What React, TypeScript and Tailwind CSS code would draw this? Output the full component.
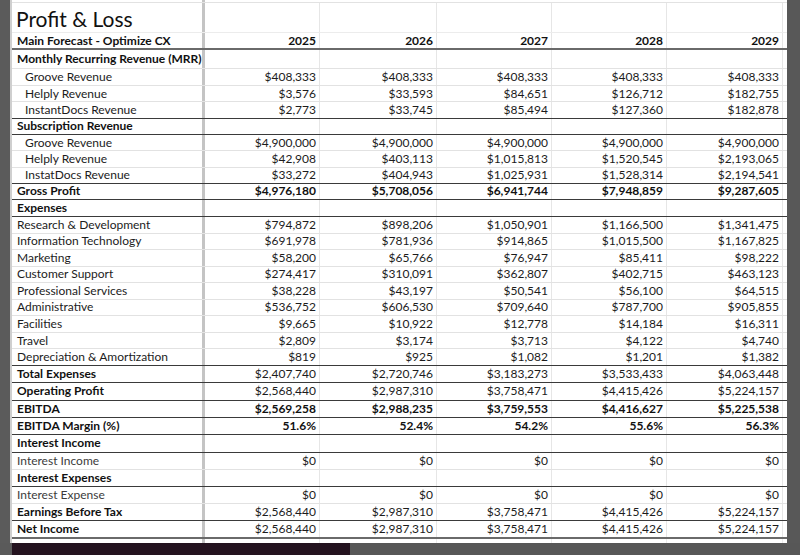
import React from 'react'

type Line = 'none' | 'light' | 'dark' | 'thick'

type Row = {
  label: string
  values?: string[]
  bold?: boolean
  boldValues?: boolean
  indent?: boolean
  h: string
  line: Line
  muted?: boolean
}

const rows: Row[] = [
  { label: 'Monthly Recurring Revenue (MRR)', bold: true, h: 'h-[19px]', line: 'light' },
  { label: 'Groove Revenue', indent: true, h: 'h-[16.7px]', line: 'light', values: ['$408,333', '$408,333', '$408,333', '$408,333', '$408,333'] },
  { label: 'Helply Revenue', indent: true, h: 'h-[16.7px]', line: 'light', values: ['$3,576', '$33,593', '$84,651', '$126,712', '$182,755'] },
  { label: 'InstantDocs Revenue', indent: true, h: 'h-[16.6px]', line: 'dark', values: ['$2,773', '$33,745', '$85,494', '$127,360', '$182,878'] },
  { label: 'Subscription Revenue', bold: true, h: 'h-[16px]', line: 'dark' },
  { label: 'Groove Revenue', indent: true, h: 'h-[16.4px]', line: 'light', values: ['$4,900,000', '$4,900,000', '$4,900,000', '$4,900,000', '$4,900,000'] },
  { label: 'Helply Revenue', indent: true, h: 'h-[16.3px]', line: 'light', values: ['$42,908', '$403,113', '$1,015,813', '$1,520,545', '$2,193,065'] },
  { label: 'InstatDocs Revenue', indent: true, h: 'h-[16.3px]', line: 'dark', values: ['$33,272', '$404,943', '$1,025,931', '$1,528,314', '$2,194,541'] },
  { label: 'Gross Profit', bold: true, boldValues: true, h: 'h-[16px]', line: 'dark', values: ['$4,976,180', '$5,708,056', '$6,941,744', '$7,948,859', '$9,287,605'] },
  { label: 'Expenses', bold: true, h: 'h-[17px]', line: 'dark' },
  { label: 'Research & Development', h: 'h-[16.55px]', line: 'light', values: ['$794,872', '$898,206', '$1,050,901', '$1,166,500', '$1,341,475'] },
  { label: 'Information Technology', h: 'h-[16.55px]', line: 'light', values: ['$691,978', '$781,936', '$914,865', '$1,015,500', '$1,167,825'] },
  { label: 'Marketing', h: 'h-[16.55px]', line: 'light', values: ['$58,200', '$65,766', '$76,947', '$85,411', '$98,222'] },
  { label: 'Customer Support', h: 'h-[16.55px]', line: 'light', values: ['$274,417', '$310,091', '$362,807', '$402,715', '$463,123'] },
  { label: 'Professional Services', h: 'h-[16.55px]', line: 'light', values: ['$38,228', '$43,197', '$50,541', '$56,100', '$64,515'] },
  { label: 'Administrative', h: 'h-[16.55px]', line: 'light', values: ['$536,752', '$606,530', '$709,640', '$787,700', '$905,855'] },
  { label: 'Facilities', h: 'h-[16.55px]', line: 'light', values: ['$9,665', '$10,922', '$12,778', '$14,184', '$16,311'] },
  { label: 'Travel', h: 'h-[16.55px]', line: 'light', values: ['$2,809', '$3,174', '$3,713', '$4,122', '$4,740'] },
  { label: 'Depreciation & Amortization', h: 'h-[16.55px]', line: 'dark', values: ['$819', '$925', '$1,082', '$1,201', '$1,382'] },
  { label: 'Total Expenses', bold: true, h: 'h-[17px]', line: 'dark', values: ['$2,407,740', '$2,720,746', '$3,183,273', '$3,533,433', '$4,063,448'] },
  { label: 'Operating Profit', bold: true, h: 'h-[18px]', line: 'dark', values: ['$2,568,440', '$2,987,310', '$3,758,471', '$4,415,426', '$5,224,157'] },
  { label: 'EBITDA', bold: true, boldValues: true, h: 'h-[17px]', line: 'dark', values: ['$2,569,258', '$2,988,235', '$3,759,553', '$4,416,627', '$5,225,538'] },
  { label: 'EBITDA Margin (%)', bold: true, boldValues: true, h: 'h-[17px]', line: 'dark', values: ['51.6%', '52.4%', '54.2%', '55.6%', '56.3%'] },
  { label: 'Interest Income', bold: true, h: 'h-[18px]', line: 'dark' },
  { label: 'Interest Income', muted: true, h: 'h-[17px]', line: 'light', values: ['$0', '$0', '$0', '$0', '$0'] },
  { label: 'Interest Expenses', bold: true, h: 'h-[17px]', line: 'dark' },
  { label: 'Interest Expense', muted: true, h: 'h-[17px]', line: 'light', values: ['$0', '$0', '$0', '$0', '$0'] },
  { label: 'Earnings Before Tax', bold: true, h: 'h-[17px]', line: 'dark', values: ['$2,568,440', '$2,987,310', '$3,758,471', '$4,415,426', '$5,224,157'] },
  { label: 'Net Income', bold: true, h: 'h-[18px]', line: 'thick', values: ['$2,568,440', '$2,987,310', '$3,758,471', '$4,415,426', '$5,224,157'] },
]

const years = ['2025', '2026', '2027', '2028', '2029']

const lineClass: Record<Line, string> = {
  none: '',
  light: 'border-b border-[#e2e2e2]',
  dark: 'border-b border-[#3a3a3a]',
  thick: 'border-b-2 border-[#6a6a6a]',
}

const cols = 'grid grid-cols-[193px_115px_117px_115px_115px_116px]'

function SheetRow({ row }: { row: Row }) {
  const vals = row.values ?? ['', '', '', '', '']
  return (
    <div className={`${cols} ${row.h} ${lineClass[row.line]} leading-none`}>
      <div
        className={`flex items-center border-r-[3px] border-[#c4c4c4] whitespace-nowrap text-[12px] ${row.indent ? 'pl-[13px]' : 'pl-[5px]'} ${row.bold ? 'font-bold text-[#111]' : row.muted ? 'text-[#3c3c3c]' : 'text-[#1c1c1c]'}`}
      >
        {row.label}
      </div>
      {vals.map((v, i) => (
        <div
          key={i}
          className={`flex items-center justify-end pr-[3px] border-r border-[#e6e6e6] text-[12px] ${row.boldValues ? 'font-bold text-[#111]' : 'text-[#1c1c1c]'}`}
        >
          {v}
        </div>
      ))}
    </div>
  )
}

export default function App() {
  return (
    <div className="w-[800px] h-[555px] overflow-hidden bg-[#5a5a5a] flex flex-col font-['Lato','Liberation_Sans',sans-serif]">
      <div className="flex h-[543px]">
        <div className="w-[10px] bg-[#5b5b5b]" />
        <div className="w-[2px] bg-[#cfcfcf]" />
        <div className="w-[775px] bg-white flex flex-col">
          {/* top strip of the row above */}
          <div className={`${cols} h-[3px] border-b border-[#e2e2e2]`}>
            <div className="border-r-[3px] border-[#c4c4c4]" />
          </div>

          {/* title */}
          <div className={`${cols} h-[30px] border-b border-[#ececec]`}>
            <div className="flex items-end pl-[4px] pb-[3px] border-r-[3px] border-[#c4c4c4] text-[21px] leading-none text-[#111] whitespace-nowrap">
              Profit &amp; Loss
            </div>
            {years.map((y) => (
              <div key={y} className="border-r border-[#e6e6e6]" />
            ))}
          </div>

          {/* header */}
          <div className={`${cols} h-[17px] border-b-2 border-[#6a6a6a] leading-none font-bold text-[#111]`}>
            <div className="flex items-center pl-[5px] border-r-[3px] border-[#c4c4c4] whitespace-nowrap text-[12px]">
              Main Forecast - Optimize CX
            </div>
            {years.map((y) => (
              <div key={y} className="flex items-center justify-end pr-[3px] border-r border-[#e6e6e6] text-[12px]">
                {y}
              </div>
            ))}
          </div>

          {rows.map((r, i) => (
            <SheetRow key={i} row={r} />
          ))}

          <div className={`${cols} flex-1`}>
            <div className="border-r-[3px] border-[#c4c4c4]" />
            {years.map((y) => (
              <div key={y} className="border-r border-[#ececec]" />
            ))}
          </div>
        </div>
        <div className="flex-1 bg-[#585858]" />
      </div>
      <div className="flex flex-1">
        <div className="w-[12px] bg-[#5a5a5a]" />
        <div className="w-[338px] bg-[#24131f]" />
        <div className="flex-1 bg-[#575757]" />
      </div>
    </div>
  )
}
